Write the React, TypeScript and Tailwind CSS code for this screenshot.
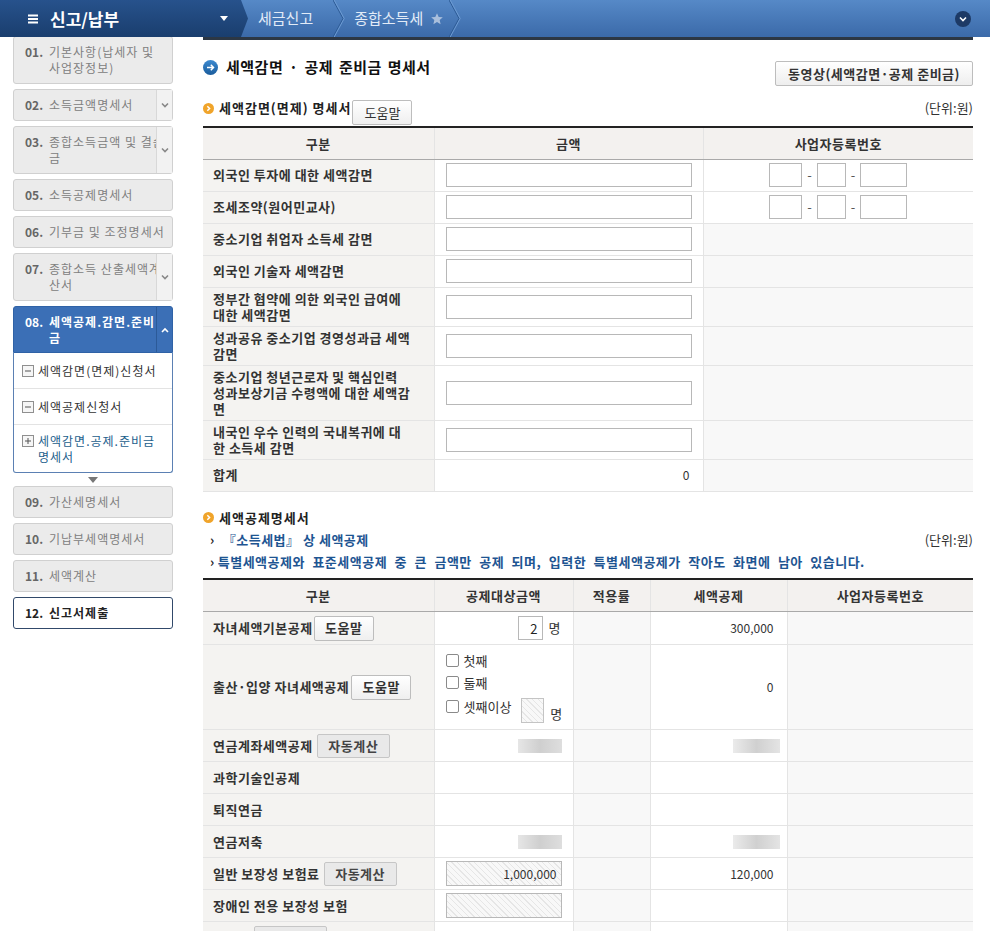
import React from "react";

const BlueArrowIcon = () => (
  <svg width="15" height="15" viewBox="0 0 15 15">
    <defs>
      <linearGradient id="ba" x1="0" y1="0" x2="0" y2="1">
        <stop offset="0" stopColor="#3d8ad0" />
        <stop offset="1" stopColor="#1a5c9c" />
      </linearGradient>
    </defs>
    <circle cx="7.5" cy="7.5" r="7.5" fill="url(#ba)" />
    <path d="M4 7.5h6.5M7.8 4.8l2.7 2.7-2.7 2.7" stroke="#fff" strokeWidth="1.5" fill="none" />
  </svg>
);

const OrangeIcon = () => (
  <svg width="11" height="11" viewBox="0 0 11 11">
    <circle cx="5.5" cy="5.5" r="5.5" fill="#f0a42a" />
    <path d="M4.3 3.2l2.3 2.3-2.3 2.3" stroke="#fff" strokeWidth="1.5" fill="none" />
  </svg>
);

const Chevron = ({ up, color }: { up?: boolean; color: string }) => (
  <svg width="8" height="6" viewBox="0 0 8 6">
    <path d={up ? "M1 5l3-3 3 3" : "M1 1.5l3 3 3-3"} stroke={color} strokeWidth="1.6" fill="none" />
  </svg>
);

const Sep = () => (
  <svg width="12" height="37" viewBox="0 0 12 37" className="shrink-0">
    <path d="M0 0l10 18.5L0 37" stroke="#2d5b95" strokeWidth="1" fill="none" />
    <path d="M1.2 0l10 18.5-10 18.5" stroke="#6d9bd3" strokeWidth="1" fill="none" />
  </svg>
);

type SideProps = {
  num: string;
  lines: string[];
  chevron?: boolean;
};

const SideItem = ({ num, lines, chevron }: SideProps) => {
  const two = lines.length > 1;
  return (
    <div
      className={
        two
          ? "flex h-[48px] rounded-[3px] border border-[#d0d0d0] bg-[#ebebeb]"
          : "flex h-[32px] rounded-[3px] border border-[#d0d0d0] bg-[#ebebeb]"
      }
    >
      <div className="flex min-w-0 flex-1 flex-col justify-center overflow-hidden pl-[11px] text-[12px] leading-[16px]">
        <div className="flex">
          <span className="w-[24px] shrink-0 font-bold text-[#666]">{num}</span>
          <span className="whitespace-nowrap tracking-[1px] text-[#808080]">{lines[0]}</span>
        </div>
        {two && <div className="pl-[24px] tracking-[1px] text-[#808080]">{lines[1]}</div>}
      </div>
      {chevron && (
        <div className="flex w-[16px] shrink-0 items-center justify-center border-l border-[#d8d8d8] bg-[#f2f2f2]">
          <Chevron color="#888" />
        </div>
      )}
    </div>
  );
};

const SubIcon = ({ plus }: { plus?: boolean }) => (
  <svg width="12" height="12" viewBox="0 0 12 12" className="shrink-0">
    <rect x="0.5" y="0.5" width="11" height="11" fill="#f6f6f6" stroke="#8f8f8f" />
    <path d="M3 6h6" stroke="#555" strokeWidth="1" />
    {plus && <path d="M6 3v6" stroke="#555" strokeWidth="1" />}
  </svg>
);

const Sidebar = () => (
  <div className="flex w-[160px] shrink-0 flex-col gap-[5px]">
    <div className="-mt-[1px]">
      <SideItem num="01." lines={["기본사항(납세자 및", "사업장정보)"]} />
    </div>
    <SideItem num="02." lines={["소득금액명세서"]} chevron />
    <SideItem num="03." lines={["종합소득금액 및 결손", "금"]} chevron />
    <SideItem num="05." lines={["소득공제명세서"]} />
    <SideItem num="06." lines={["기부금 및 조정명세서"]} />
    <SideItem num="07." lines={["종합소득 산출세액계", "산서"]} chevron />
    <div className="flex flex-col">
      <div className="flex h-[47px] rounded-t-[3px] border border-[#2f62a6] bg-[#3b6fb6]">
        <div className="flex min-w-0 flex-1 flex-col justify-center overflow-hidden pl-[11px] text-[12px] font-bold leading-[16px] text-white">
          <div className="flex">
            <span className="w-[24px] shrink-0">08.</span>
            <span className="whitespace-nowrap tracking-[1px]">세액공제.감면.준비</span>
          </div>
          <div className="pl-[24px]">금</div>
        </div>
        <div className="flex w-[16px] shrink-0 items-center justify-center border-l border-[#2c5a98]">
          <Chevron up color="#fff" />
        </div>
      </div>
      <div className="flex flex-col rounded-b-[3px] border border-t-0 border-[#5b80b3] bg-white text-[12px] leading-[16px] tracking-[1px]">
        <div className="flex h-[36px] items-center gap-[4px] border-b border-[#e3e3e3] pl-[8px] text-[#333]">
          <SubIcon />
          <span className="whitespace-nowrap">세액감면(면제)신청서</span>
        </div>
        <div className="flex h-[36px] items-center gap-[4px] border-b border-[#e3e3e3] pl-[8px] text-[#333]">
          <SubIcon />
          <span>세액공제신청서</span>
        </div>
        <div className="flex h-[47px] items-start gap-[4px] pl-[8px] pt-[8px] text-[#1c5e8c]">
          <div className="pt-[2px]">
            <SubIcon plus />
          </div>
          <span>
            세액감면.공제.준비금
            <br />
            명세서
          </span>
        </div>
      </div>
    </div>
    <div className="flex h-[3px] items-center justify-center">
      <svg width="10" height="6" viewBox="0 0 10 6" className="shrink-0">
        <path d="M0 0h10L5 6z" fill="#777" />
      </svg>
    </div>
    <SideItem num="09." lines={["가산세명세서"]} />
    <SideItem num="10." lines={["기납부세액명세서"]} />
    <SideItem num="11." lines={["세액계산"]} />
    <div className="flex h-[32px] items-center rounded-[3px] border border-[#31496a] bg-white pl-[11px] text-[12px] font-bold text-[#222]">
      <span className="w-[24px]">12.</span>
      <span className="tracking-[1px]">신고서제출</span>
    </div>
  </div>
);

const HelpBtn = ({ label }: { label: string }) => (
  <button className="h-[25px] w-[60px] shrink-0 rounded-[2px] border border-[#bdbdbd] bg-linear-to-b from-white to-[#efefef] text-[13px] text-[#333]">
    {label}
  </button>
);

const AutoBtn = () => (
  <button className="h-[24px] w-[73px] shrink-0 rounded-[2px] border border-[#c6c6c6] bg-[#e9e9e9] text-[13px] font-bold tracking-[0.5px] text-[#444]">
    자동계산
  </button>
);

const Blur = ({ w }: { w: string }) => (
  <div className="flex justify-end">
    <div
      className={
        w === "a"
          ? "h-[14px] w-[44px] bg-linear-to-r from-[#e6e6e6] via-[#cfcfcf] to-[#dedede] blur-[0.6px]"
          : "h-[14px] w-[47px] bg-linear-to-r from-[#ebebeb] via-[#d0d0d0] to-[#e4e4e4] blur-[0.6px]"
      }
    />
  </div>
);

const hatch =
  "block h-[25px] w-full border border-[#b8b8b8] bg-[repeating-linear-gradient(45deg,#f8f8f8_0px,#f8f8f8_3px,#e6e6e6_3px,#e6e6e6_4px)] px-[4px] text-right text-[12px] text-[#333]";

const td1 =
  "border-r border-b border-[#e4e4e4] bg-[#f4f3f1] px-[10px] text-left font-bold leading-[16px] tracking-[0.5px] text-[#333]";
const tdw = "border-r border-b border-[#e4e4e4] bg-white px-[11px]";
const tdg = "border-r border-b border-[#e4e4e4] bg-[#f8f8f8] px-[11px]";
const tdNum = "border-r border-b border-[#e4e4e4] bg-white pr-[13px] text-right text-[12px] text-[#333]";
const tdLast = "border-b border-[#e4e4e4] bg-[#f8f8f8]";

const amountInput = <input className="block h-[24px] w-full border border-[#b8b8b8] bg-white" />;

const BizNo = () => (
  <div className="flex items-center justify-center gap-[5px] text-[#555]">
    <input className="h-[24px] w-[33px] border border-[#b8b8b8] bg-white" />
    <span>-</span>
    <input className="h-[24px] w-[29px] border border-[#b8b8b8] bg-white" />
    <span>-</span>
    <input className="h-[24px] w-[47px] border border-[#b8b8b8] bg-white" />
  </div>
);

const reductions: { label: React.ReactNode; h: string }[] = [
  { label: "중소기업 취업자 소득세 감면", h: "h-[32px]" },
  { label: "외국인 기술자 세액감면", h: "h-[32px]" },
  { label: <>정부간 협약에 의한 외국인 급여에<br />대한 세액감면</>, h: "h-[39px]" },
  { label: <>성과공유 중소기업 경영성과급 세액<br />감면</>, h: "h-[39px]" },
  { label: <>중소기업 청년근로자 및 핵심인력<br />성과보상기금 수령액에 대한 세액감<br />면</>, h: "h-[55px]" },
  { label: <>내국인 우수 인력의 국내복귀에 대<br />한 소득세 감면</>, h: "h-[39px]" },
];

const TableOne = () => (
  <table className="w-full table-fixed border-collapse border-t-2 border-t-[#222] text-[13px]">
    <colgroup>
      <col className="w-[231px]" />
      <col className="w-[269px]" />
      <col />
    </colgroup>
    <thead>
      <tr className="h-[32px] bg-[#f3f1ef] tracking-[0.5px]">
        <th className="border-r border-b border-r-[#e4e4e4] border-b-[#a9a9a9] font-bold">구분</th>
        <th className="border-r border-b border-r-[#e4e4e4] border-b-[#a9a9a9] font-bold">금액</th>
        <th className="border-b border-b-[#a9a9a9] font-bold">사업자등록번호</th>
      </tr>
    </thead>
    <tbody>
      <tr className="h-[32px]">
        <td className={td1}>외국인 투자에 대한 세액감면</td>
        <td className={tdw}>{amountInput}</td>
        <td className="border-b border-[#e4e4e4] bg-white">
          <BizNo />
        </td>
      </tr>
      <tr className="h-[32px]">
        <td className={td1}>조세조약(원어민교사)</td>
        <td className={tdw}>{amountInput}</td>
        <td className="border-b border-[#e4e4e4] bg-white">
          <BizNo />
        </td>
      </tr>
      {reductions.map((r, i) => (
        <tr key={i} className={r.h}>
          <td className={td1}>{r.label}</td>
          <td className={tdw}>{amountInput}</td>
          <td className={tdLast} />
        </tr>
      ))}
      <tr className="h-[32px]">
        <td className={td1}>합계</td>
        <td className={tdNum}>0</td>
        <td className={tdLast} />
      </tr>
    </tbody>
  </table>
);

const Check = ({ label }: { label: string }) => (
  <div className="flex h-[18px] items-center gap-[5px] whitespace-nowrap text-[13px] text-[#333]">
    <span className="h-[13px] w-[13px] shrink-0 rounded-[2px] border border-[#8a8a8a] bg-white" />
    <span>{label}</span>
  </div>
);

const TableTwo = () => (
  <table className="w-full table-fixed border-collapse border-t-2 border-t-[#222] text-[13px]">
    <colgroup>
      <col className="w-[231px]" />
      <col className="w-[139px]" />
      <col className="w-[77px]" />
      <col className="w-[137px]" />
      <col />
    </colgroup>
    <thead>
      <tr className="h-[33px] bg-[#f3f1ef] tracking-[0.5px]">
        <th className="border-r border-b border-r-[#e4e4e4] border-b-[#a9a9a9] font-bold">구분</th>
        <th className="border-r border-b border-r-[#e4e4e4] border-b-[#a9a9a9] font-bold">공제대상금액</th>
        <th className="border-r border-b border-r-[#e4e4e4] border-b-[#a9a9a9] font-bold">적용률</th>
        <th className="border-r border-b border-r-[#e4e4e4] border-b-[#a9a9a9] font-bold">세액공제</th>
        <th className="border-b border-b-[#a9a9a9] font-bold">사업자등록번호</th>
      </tr>
    </thead>
    <tbody>
      <tr className="h-[33px]">
        <td className={td1}>
          <div className="flex items-center gap-[1px]">
            <span>자녀세액기본공제</span>
            <HelpBtn label="도움말" />
          </div>
        </td>
        <td className={tdw}>
          <div className="flex items-center justify-end gap-[6px] pr-[1px]">
            <input
              readOnly
              value="2"
              className="h-[24px] w-[25px] border border-[#b8b8b8] bg-white px-[4px] text-right text-[13px] text-[#222]"
            />
            <span className="text-[#333]">명</span>
          </div>
        </td>
        <td className={tdg} />
        <td className={tdNum}>300,000</td>
        <td className={tdLast} />
      </tr>
      <tr className="h-[85px]">
        <td className={td1}>
          <div className="flex items-center gap-[2px]">
            <span>출산·입양 자녀세액공제</span>
            <HelpBtn label="도움말" />
          </div>
        </td>
        <td className={tdw}>
          <div className="flex flex-col">
            <Check label="첫째" />
            <div className="mt-[4px]">
              <Check label="둘째" />
            </div>
            <div className="mt-[6px] flex items-start">
              <Check label="셋째이상" />
              <div className="ml-[10px] h-[25px] w-[23px] shrink-0 border border-[#c4c4c4] bg-[repeating-linear-gradient(45deg,#f8f8f8_0px,#f8f8f8_3px,#e6e6e6_3px,#e6e6e6_4px)]" />
              <span className="ml-[6px] self-end leading-[18px] text-[#333]">명</span>
            </div>
          </div>
        </td>
        <td className={tdg} />
        <td className={tdNum}>0</td>
        <td className={tdLast} />
      </tr>
      <tr className="h-[32px]">
        <td className={td1}>
          <div className="flex items-center gap-[4px]">
            <span>연금계좌세액공제</span>
            <AutoBtn />
          </div>
        </td>
        <td className={tdw}>
          <Blur w="a" />
        </td>
        <td className={tdg} />
        <td className="border-r border-b border-[#e4e4e4] bg-white pr-[7px]">
          <Blur w="b" />
        </td>
        <td className={tdLast} />
      </tr>
      <tr className="h-[32px]">
        <td className={td1}>과학기술인공제</td>
        <td className={tdw} />
        <td className={tdg} />
        <td className={tdNum} />
        <td className={tdLast} />
      </tr>
      <tr className="h-[32px]">
        <td className={td1}>퇴직연금</td>
        <td className={tdw} />
        <td className={tdg} />
        <td className={tdNum} />
        <td className={tdLast} />
      </tr>
      <tr className="h-[32px]">
        <td className={td1}>연금저축</td>
        <td className={tdw}>
          <Blur w="a" />
        </td>
        <td className={tdg} />
        <td className="border-r border-b border-[#e4e4e4] bg-white pr-[7px]">
          <Blur w="b" />
        </td>
        <td className={tdLast} />
      </tr>
      <tr className="h-[32px]">
        <td className={td1}>
          <div className="flex items-center gap-[4px]">
            <span>일반 보장성 보험료</span>
            <AutoBtn />
          </div>
        </td>
        <td className={tdw}>
          <input readOnly value="1,000,000" className={hatch} />
        </td>
        <td className={tdg} />
        <td className={tdNum}>120,000</td>
        <td className={tdLast} />
      </tr>
      <tr className="h-[32px]">
        <td className={td1}>장애인 전용 보장성 보험</td>
        <td className={tdw}>
          <input readOnly value="" className={hatch} />
        </td>
        <td className={tdg} />
        <td className={tdNum} />
        <td className={tdLast} />
      </tr>
      <tr className="h-[32px]">
        <td className={td1}>
          <div className="flex items-center gap-[4px]">
            <span>의료비</span>
            <AutoBtn />
          </div>
        </td>
        <td className={tdw} />
        <td className={tdg} />
        <td className={tdNum} />
        <td className={tdLast} />
      </tr>
    </tbody>
  </table>
);

const SectionHead = ({ children }: { children: React.ReactNode }) => (
  <div className="flex items-center gap-[5px] text-[13px] font-bold leading-[16px] tracking-[1px] text-[#222]">
    <OrangeIcon />
    {children}
  </div>
);

const Main = () => (
  <div className="flex w-[770px] shrink-0 flex-col border-t-[3px] border-[#2c3744]">
    <div className="mt-[21px] flex h-[24px] items-start justify-between">
      <div className="-mt-[2px] flex items-center gap-[8px]">
        <BlueArrowIcon />
        <span className="text-[15px] font-bold leading-[16px] tracking-[0.5px] text-[#111] [word-spacing:2px]">
          세액감면 · 공제 준비금 명세서
        </span>
      </div>
      <button className="h-[25px] w-[198px] rounded-[2px] border border-[#bdbdbd] bg-linear-to-b from-white to-[#eeeeee] text-[13px] font-bold tracking-[0.5px] text-[#333]">
        동영상(세액감면·공제 준비금)
      </button>
    </div>
    <div className="mt-[15px] flex h-[26px] items-start justify-between">
      <div className="flex items-start gap-[1px]">
        <SectionHead>세액감면(면제) 명세서</SectionHead>
        <HelpBtn label="도움말" />
      </div>
      <span className="text-[13px] leading-[16px] text-[#333]">(단위:원)</span>
    </div>
    <TableOne />
    <div className="mt-[18px]">
      <SectionHead>세액공제명세서</SectionHead>
    </div>
    <div className="mt-[6px] flex items-center justify-between leading-[16px]">
      <div className="flex items-center gap-[8px] pl-[7px] text-[13px] font-bold tracking-[0.5px] text-[#1e5592]">
        <span className="text-[#222]">›</span>
        <span>『소득세법』 상 세액공제</span>
      </div>
      <span className="text-[13px] text-[#333]">(단위:원)</span>
    </div>
    <div className="mt-[6px] flex items-center gap-[3px] pl-[7px] text-[13px] font-bold leading-[16px] tracking-[0.5px] text-[#1e5592] [word-spacing:4px]">
      <span className="text-[#222]">›</span>
      <span className="whitespace-nowrap">
        특별세액공제와 표준세액공제 중 큰 금액만 공제 되며, 입력한 특별세액공제가 작아도 화면에 남아 있습니다.
      </span>
    </div>
    <div className="mt-[8px]">
      <TableTwo />
    </div>
  </div>
);

const TopBar = () => (
  <div className="flex h-[37px] items-center bg-linear-to-b from-[#5689c7] to-[#3b6aa9]">
    <div className="flex h-full w-[248px] shrink-0 items-center bg-linear-to-b from-[#27528c] to-[#1a3e6e] pl-[28px] pr-[20px] [clip-path:polygon(0_0,241px_0,248px_50%,241px_100%,0_100%)]">
      <svg width="10" height="10" viewBox="0 0 10 10">
        <path d="M0 1.5h10M0 5h10M0 8.5h10" stroke="#fff" strokeWidth="1.8" />
      </svg>
      <span className="ml-[12px] text-[17px] font-bold text-white">신고/납부</span>
      <svg width="8" height="5" viewBox="0 0 8 5" className="ml-auto">
        <path d="M0 0h8L4 5z" fill="#fff" />
      </svg>
    </div>
    <span className="ml-[10px] text-[15px] text-[#e2ebf7]">세금신고</span>
    <div className="ml-[20px]">
      <Sep />
    </div>
    <span className="ml-[9px] text-[15px] text-[#e2ebf7]">종합소득세</span>
    <svg width="14" height="14" viewBox="0 0 24 24" className="ml-[7px]">
      <path
        d="M12 2l2.9 6.6 7.1.6-5.4 4.7 1.6 7.1L12 17.3 5.8 21l1.6-7.1L2 9.2l7.1-.6z"
        fill="#a9bfdc"
      />
    </svg>
    <div className="ml-[5px]">
      <Sep />
    </div>
    <div className="ml-auto mr-[19px] flex h-[16px] w-[16px] items-center justify-center rounded-full bg-[#1d3a66]">
      <Chevron color="#fff" />
    </div>
  </div>
);

export default function App() {
  return (
    <div className="h-[931px] w-[990px] overflow-hidden bg-white font-['Noto_Sans_CJK_KR',sans-serif] text-[13px] text-[#333]">
      <TopBar />
      <div className="flex pl-[13px]">
        <Sidebar />
        <div className="ml-[30px]">
          <Main />
        </div>
      </div>
    </div>
  );
}
